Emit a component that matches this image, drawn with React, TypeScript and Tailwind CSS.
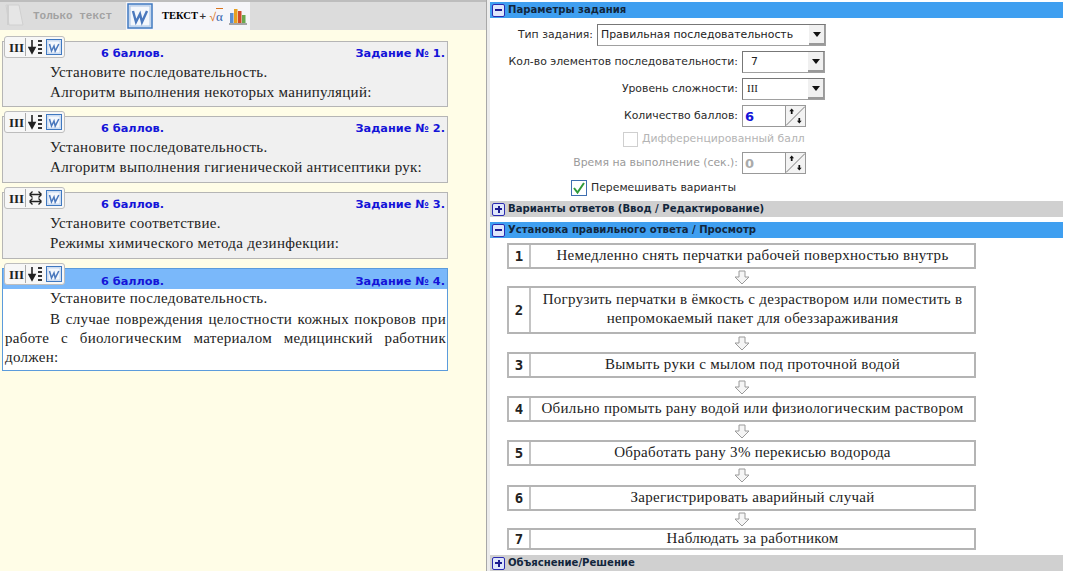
import React from "react";

const serif = "font-['Liberation_Serif',serif]";
const sans = "font-['DejaVu_Sans',sans-serif]";

function WordIcon({ size = 16 }: { size?: number }) {
  return (
    <svg width={size} height={size} viewBox="0 0 16 16" className="block shrink-0">
      <rect x="0.5" y="0.5" width="15" height="15" fill="#dfe9f7" stroke="#3f78c0" />
      <rect x="2" y="2" width="12" height="12" fill="#f5f8fd" stroke="#a9c4e6" strokeWidth="0.6" />
      <path d="M3.5 5 L5.5 12 L8 7 L9.2 12 L12.8 5" fill="none" stroke="#4a78bd" strokeWidth="1.5" />
    </svg>
  );
}

function SortIcon() {
  return (
    <svg width="15" height="16" viewBox="0 0 15 16" className="block shrink-0">
      <path d="M4 1v9M1 8.5h6L4 14z" fill="#222" stroke="#222" strokeWidth="1.6" />
      <path d="M10 2h4M10 6h4M10 10h4M10 14h4" stroke="#333" strokeWidth="2" />
    </svg>
  );
}

function SwapIcon() {
  return (
    <svg width="15" height="16" viewBox="0 0 15 16" className="block shrink-0">
      <path d="M1.5 4.5h12M1.5 4.5l3-3M1.5 4.5l3 3M13.5 4.5l-3-3M13.5 4.5l-3 3M1.5 11.5h12M1.5 11.5l3-3M1.5 11.5l3 3M13.5 11.5l-3-3M13.5 11.5l-3 3" fill="none" stroke="#222" strokeWidth="1.3" />
    </svg>
  );
}

function Card({ y, active, swap, n, lines, h }: { y: string; active?: boolean; swap?: boolean; n: number; lines: React.ReactNode; h: string }) {
  return (
    <div className={`relative ml-[2px] w-[446px] border ${h} ${y} ${active ? "border-[#5b9bdc] bg-white" : "border-[#b5b5b5] bg-[#f0f0f0]"}`}>
      <div className="absolute -top-[6px] left-[1px] flex h-[22px] w-[61px] items-center rounded-[3px] border border-[#bdbdbd] bg-[#f7f7f7] pl-[4px]">
        <span className={`${serif} w-[16px] text-[13px] font-bold leading-none text-[#222]`}>III</span>
        <span className="mr-[2px] h-[18px] w-px bg-[#aaa]" />
        <span className="w-[18px]">{swap ? <SwapIcon /> : <SortIcon />}</span>
        <WordIcon />
      </div>
      <div className={`${sans} flex h-[20px] items-end justify-between pl-[98px] pr-[2px] text-[11.3px] font-bold leading-none text-[#1414d8] ${active ? "bg-[#7ab8fa] pb-[2px]" : "pb-[3px]"}`}>
        <span>6 баллов.</span>
        <span>Задание № {n}.</span>
      </div>
      <div className={`${serif} pl-[2px] pr-[1px] text-[15px] leading-[20px] tracking-[0.3px] text-[#222]`}>{lines}</div>
    </div>
  );
}

function Line({ children, up }: { children: React.ReactNode; up?: boolean }) {
  return <div className={`whitespace-nowrap pl-[45px] ${up ? "-mt-[1px]" : ""}`}>{children}</div>;
}

function Header({ title, open, mt = "" }: { title: string; open?: boolean; mt?: string }) {
  return (
    <div className={`flex h-[16px] shrink-0 items-center pl-[2px] ${mt} ${open ? "bg-[#3f9ff0]" : "bg-[#d0d0d0]"}`}>
      <span className="relative mr-[3px] flex h-[13px] w-[13px] items-center justify-center rounded-[2px] border border-[#2a2ab0] bg-[#dfe6fb]">
        <span className="h-[2px] w-[7px] bg-[#1c1c90]" />
        {!open && <span className="absolute h-[7px] w-[2px] bg-[#1c1c90]" />}
      </span>
      <span className={`${sans} pt-[1px] text-[10.1px] font-bold leading-none text-[#12263c]`}>{title}</span>
    </div>
  );
}

function Select({ children, w, pad = "pl-[3px]" }: { children: React.ReactNode; w: string; pad?: string }) {
  return (
    <div className={`flex h-[22px] ${w} items-center border border-[#a0a0a0] border-l-[#777] border-t-[#777] bg-white`}>
      <span className={`flex-1 whitespace-nowrap ${pad} text-[10.9px] leading-none text-[#222]`}>{children}</span>
      <span className="flex h-[20px] w-[16px] items-center justify-center border-b-2 border-r border-[#999] bg-[#f0f0f0]">
        <svg width="8" height="5" viewBox="0 0 8 5"><path d="M0 0h8L4 5z" fill="#111" /></svg>
      </span>
    </div>
  );
}

function Spinner({ value, disabled }: { value: string; disabled?: boolean }) {
  return (
    <div className="flex h-[22px] w-[64px] items-center border border-[#999] bg-white">
      <span className={`flex-1 pl-[2px] text-[13px] font-bold leading-none ${disabled ? "text-[#aaa]" : "text-[#1414d8]"}`}>{value}</span>
      <svg width="20" height="20" viewBox="0 0 20 20" className="block shrink-0 border-l border-[#999] bg-[#f3f3f3]">
        <path d="M0 20L20 0" stroke="#777" />
        <path d="M6 2l2.5 3h-1.6v3H5.1V5H3.5zM14 18l-2.5-3h1.6v-3h1.8v3h1.6z" fill="#111" />
      </svg>
    </div>
  );
}

function Row({ label, labelW, children, mt, muted }: { label: string; labelW: string; children: React.ReactNode; mt: string; muted?: boolean }) {
  return (
    <div className={`flex items-center ${mt}`}>
      <span className={`${labelW} whitespace-nowrap text-right text-[10.85px] leading-none ${muted ? "text-[#9a9a9a]" : "text-[#2a2a2a]"}`}>{label}</span>
      <span className="ml-[4px]">{children}</span>
    </div>
  );
}

function Arrow({ h }: { h: string }) {
  return (
    <div className={`flex ${h} items-center justify-center`}>
      <svg width="16" height="15" viewBox="0 0 16 15"><path d="M5 1h6v6h4l-7 7-7-7h4z" fill="#f5f5f5" stroke="#9a9a9a" /></svg>
    </div>
  );
}

function Step({ n, text, h }: { n: number; text: React.ReactNode; h: string }) {
  return (
    <div className={`flex ${h} shrink-0 items-stretch border-2 border-[#b4b4b4] border-l-[#b8b8b8] bg-white`}>
      <span className="flex w-[22px] shrink-0 items-center justify-center border-r-2 border-[#c4c4c4] font-['DejaVu_Sans_Mono',monospace] text-[14px] font-bold leading-none text-[#222]">{n}</span>
      <span className={`${serif} flex flex-1 items-center justify-center whitespace-nowrap pb-[2px] text-center text-[15px] leading-[19px] tracking-[0.3px] text-[#222]`}>{text}</span>
    </div>
  );
}

export default function App() {
  return (
    <div className="flex h-[571px] w-[1067px] overflow-hidden bg-white">
      {/* Left */}
      <div className="flex h-full w-[486px] shrink-0 flex-col bg-[#fffde7]">
        <div className="flex h-[30px] shrink-0 items-center border-t-2 border-[#bdbdbd] bg-[#dcdcdc] pl-[3px]">
          <svg width="23" height="26" viewBox="0 0 23 26" className="block shrink-0">
            <path d="M3 2h13l4 20H6z" fill="#e6e6e6" stroke="#d0d0d0" />
            <path d="M5 2v20" stroke="#cfcfcf" strokeWidth="2" />
          </svg>
          <span className="ml-[7px] w-[93px] whitespace-nowrap font-['Liberation_Mono',monospace] text-[11px] font-bold leading-none text-[#a2a2a2]">Только текст</span>
          <div className="flex h-[28px] w-[124px] items-center bg-[#f5f5f9] pl-[1px]">
            <svg width="26" height="26" viewBox="0 0 26 26" className="block shrink-0">
              <rect x="1" y="1" width="24" height="24" fill="#dbe6f6" stroke="#3f78c0" strokeWidth="1.5" />
              <rect x="3" y="3" width="20" height="20" fill="#f4f7fc" stroke="#a9c4e6" />
              <path d="M6 8l3 11 4-8 2 8 5-11" fill="none" stroke="#4a78bd" strokeWidth="2.4" />
            </svg>
            <span className={`${serif} ml-[9px] text-[10.5px] font-bold leading-none text-black`}>ТЕКСТ</span>
            <span className={`${sans} ml-[1px] text-[9px] font-bold leading-none text-[#333]`}>+</span>
            <span className="ml-[3px] text-[12px] leading-none text-[#2f62ad]">
              <span className="text-[#d8741f]">√</span>
              <span className={`${serif} border-t border-[#d8741f] text-[13px]`}>α</span>
            </span>
            <svg width="18" height="18" viewBox="0 0 18 18" className="ml-[6px] block shrink-0">
              <rect x="1" y="6" width="3.5" height="10" fill="#5b8fd0" />
              <rect x="5" y="2" width="3.5" height="14" fill="#e8a020" />
              <rect x="9" y="4" width="3.5" height="12" fill="#d04a2a" />
              <rect x="13" y="8" width="3.5" height="8" fill="#6aa84f" />
              <path d="M0 17h18" stroke="#555" />
            </svg>
          </div>
        </div>
        <Card y="mt-[11px]" h="h-[66px]" n={1} lines={<><Line>Установите последовательность.</Line><Line>Алгоритм выполнения некоторых манипуляций:</Line></>} />
        <Card y="mt-[9px]" h="h-[67px]" n={2} lines={<><Line>Установите последовательность.</Line><Line>Алгоритм выполнения гигиенической антисептики рук:</Line></>} />
        <Card y="mt-[9px]" h="h-[67px]" swap n={3} lines={<><Line>Установите соответствие.</Line><Line>Режимы химического метода дезинфекции:</Line></>} />
        <Card y="mt-[9px]" h="h-[103px]" active n={4} lines={<><Line up>Установите последовательность.</Line><div className="mt-[2px] text-justify indent-[45px] leading-[19px]">В случае повреждения целостности кожных покровов при работе с биологическим материалом медицинский работник должен:</div></>} />
      </div>
      {/* Splitter */}
      <div className="h-full w-[4px] shrink-0 border-l border-[#a8a8a8] bg-[#ececec]" />
      {/* Right */}
      <div className={`flex h-full w-[573px] shrink-0 flex-col ${sans} pt-[2px]`}>
        <Header open title="Параметры задания" />
        <div className="flex h-[183px] shrink-0 flex-col">
          <Row labelW="w-[103px]" label="Тип задания:" mt="mt-[6px]"><Select w="w-[229px]">Правильная последовательность</Select></Row>
          <Row labelW="w-[248px]" label="Кол-во элементов последовательности:" mt="mt-[5px]"><Select w="w-[83px]" pad="pl-[8px]">7</Select></Row>
          <Row labelW="w-[248px]" label="Уровень сложности:" mt="mt-[5px]"><Select w="w-[83px]" pad="pl-[4px]"><span className={serif}>III</span></Select></Row>
          <Row labelW="w-[248px]" label="Количество баллов:" mt="mt-[5px]"><Spinner value="6" /></Row>
          <div className="ml-[133px] mt-[5px] flex items-center text-[10.85px] leading-none text-[#b4b4b4]">
            <span className="mr-[4px] h-[15px] w-[15px] border border-[#cfcfcf] bg-white" />Дифференцированный балл
          </div>
          <Row muted labelW="w-[248px]" label="Время на выполнение (сек.):" mt="mt-[5px]"><Spinner disabled value="0" /></Row>
          <div className="ml-[81px] mt-[6px] flex items-center text-[10.85px] leading-none text-[#2a2a2a]">
            <span className="mr-[4px] flex h-[16px] w-[16px] items-center justify-center border border-[#3f6fb0] bg-white">
              <svg width="14" height="14" viewBox="0 0 14 14"><path d="M2 7l3.5 4.5L12 2" fill="none" stroke="#2f9a3a" strokeWidth="2" /></svg>
            </span>
            Перемешивать варианты
          </div>
        </div>
        <Header title="Варианты ответов (Ввод / Редактирование)" />
        <Header open mt="mt-[5px]" title="Установка правильного ответа / Просмотр" />
        <div className="ml-[17px] mt-[5px] flex w-[469px] flex-1 flex-col">
          <Step n={1} h="h-[26px]" text="Немедленно снять перчатки рабочей поверхностью внутрь" />
          <Arrow h="h-[17px]" />
          <Step n={2} h="h-[48px]" text={<span>Погрузить перчатки в ёмкость с дезраствором или поместить в<br />непромокаемый пакет для обеззараживания</span>} />
          <Arrow h="h-[18px]" />
          <Step n={3} h="h-[26px]" text="Вымыть руки с мылом под проточной водой" />
          <Arrow h="h-[18px]" />
          <Step n={4} h="h-[26px]" text="Обильно промыть рану водой или физиологическим раствором" />
          <Arrow h="h-[18px]" />
          <Step n={5} h="h-[26px]" text="Обработать рану 3% перекисью водорода" />
          <Arrow h="h-[19px]" />
          <Step n={6} h="h-[26px]" text="Зарегистрировать аварийный случай" />
          <Arrow h="h-[17px]" />
          <Step n={7} h="h-[22px]" text="Наблюдать за работником" />
        </div>
        <Header title="Объяснение/Решение" />
      </div>
    </div>
  );
}
